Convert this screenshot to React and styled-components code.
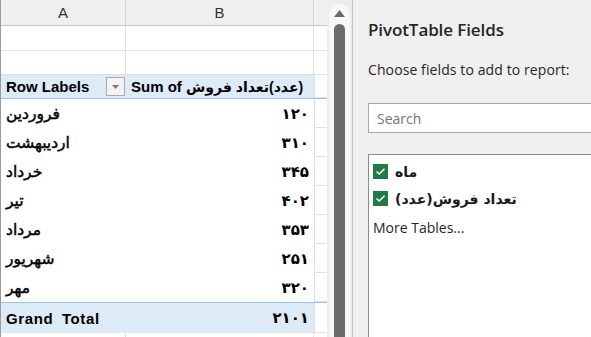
import styled, { createGlobalStyle } from "styled-components";

const GlobalStyle = createGlobalStyle`
html, body {
  margin: 0;
  padding: 0;
  width: 591px;
  height: 337px;
  overflow: hidden;
  background: #ffffff;
}
`

const rows = [
    { label: "فروردین", value: "۱۲۰" },
    { label: "اردیبهشت", value: "۳۱۰" },
    { label: "خرداد", value: "۳۴۵" },
    { label: "تیر", value: "۴۰۲" },
    { label: "مرداد", value: "۳۵۳" },
    { label: "شهریور", value: "۲۵۱" },
    { label: "مهر", value: "۳۲۰" },
]

const fields = ["ماه", "تعداد فروش(عدد)"]

const Check = () => (
    <CheckBox>
        <svg width="11" height="9" viewBox="0 0 11 9">
            <path d="M1.5 4.5 L4.2 7 L9.5 1.8" fill="none" stroke="#fff" strokeWidth="1.6" />
        </svg>
    </CheckBox>
)

const App = () => {
    return (
        <Wrap>
            <GlobalStyle />
            <Sheet>
                <HeadRow>
                    <HeadCell>A</HeadCell>
                    <HeadCell>B</HeadCell>
                    <HeadCell />
                </HeadRow>
                <GridRow $h={25}>
                    <Cell /><Cell /><Cell />
                </GridRow>
                <GridRow $h={24}>
                    <Cell /><Cell /><Cell />
                </GridRow>
                <PivotRow $head>
                    <LabelCell $bold>
                        Row Labels
                        <DropButton>
                            <svg width="7" height="4" viewBox="0 0 7 4"><path d="M0 0 H7 L3.5 4 Z" fill="#7a7a7a" /></svg>
                        </DropButton>
                    </LabelCell>
                    <LabelCell $bold>
                        Sum of&nbsp;<Farsi dir="rtl">(عدد)تعداد فروش</Farsi>
                    </LabelCell>
                    <Cell />
                </PivotRow>
                {rows.map((r) => (
                    <PivotRow key={r.label}>
                        <LabelCell $fa>{r.label}</LabelCell>
                        <ValueCell>{r.value}</ValueCell>
                        <Cell />
                    </PivotRow>
                ))}
                <PivotRow $total>
                    <LabelCell $bold $wide>Grand Total</LabelCell>
                    <ValueCell $bold>۲۱۰۱</ValueCell>
                    <Cell />
                </PivotRow>
                <GridRow $h={24}>
                    <Cell /><Cell /><Cell />
                </GridRow>
            </Sheet>
            <ScrollBar>
                <Track>
                    <svg width="11" height="7" viewBox="0 0 11 7"><path d="M0 7 L5.5 0 L11 7 Z" fill="#6b6b6b" /></svg>
                    <Thumb />
                </Track>
            </ScrollBar>
            <Panel>
                <Title>PivotTable Fields</Title>
                <Hint>Choose fields to add to report:</Hint>
                <Search>Search</Search>
                <FieldList>
                    {fields.map((f) => (
                        <FieldItem key={f}>
                            <Check />
                            <bdi dir="rtl">{f}</bdi>
                        </FieldItem>
                    ))}
                    <MoreLink>More Tables...</MoreLink>
                </FieldList>
            </Panel>
        </Wrap>
    )
}

const Wrap = styled.div`
width: 591px;
height: 337px;
display: flex;
overflow: hidden;
`
const Sheet = styled.div`
width: 327px;
flex-shrink: 0;
display: flex;
flex-direction: column;
border-left: 1px solid #9a9a9a;
box-sizing: border-box;
font-family: "Liberation Sans", "DejaVu Sans", sans-serif;
font-size: 15px;
color: #000;
& > * { flex-shrink: 0; }
`
const HeadRow = styled.div`
display: grid;
grid-template-columns: 125px 188px 1fr;
height: 26px;
background: #efefef;
border-bottom: 1px solid #c8c8c8;
box-sizing: border-box;
`
const HeadCell = styled.div`
display: flex;
align-items: center;
justify-content: center;
border-right: 1px solid #d4d4d4;
color: #333;
font-size: 15px;
&:last-child { border-right: none; }
`
const GridRow = styled.div`
display: grid;
grid-template-columns: 125px 188px 1fr;
height: ${p => p.$h}px;
border-bottom: 1px solid #e0e0e0;
box-sizing: border-box;
`
const Cell = styled.div`
border-right: 1px solid #e0e0e0;
&:last-child { border-right: none; }
`
const PivotRow = styled.div`
display: grid;
grid-template-columns: 125px 188px 1fr;
height: ${p => (p.$head ? 24 : p.$total ? 31 : 29)}px;
box-sizing: border-box;
border-top: ${p => (p.$total ? "1px solid #9dc3e6" : "none")};
border-bottom: ${p => (p.$head ? "1px solid #9dc3e6" : "none")};
background: linear-gradient(to right, ${p => (p.$head || p.$total ? "#ddebf7" : "#fff")} 313px, #fff 313px);
& > ${Cell} {
  background: #fff;
  border-bottom: 1px solid #e0e0e0;
  border-left: 1px solid #e0e0e0;
}
`
const LabelCell = styled.div`
display: flex;
align-items: center;
padding-left: 5px;
font-weight: ${p => (p.$bold ? 700 : 400)};
font-size: ${p => (p.$fa ? "15.5px" : "15px")};
-webkit-text-stroke: ${p => (p.$fa ? "0.45px #000" : "0")};
word-spacing: ${p => (p.$wide ? "4px" : "0")};
letter-spacing: ${p => (p.$wide ? "0.6px" : "0")};
white-space: nowrap;
overflow: hidden;
`
const Farsi = styled.bdi`
font-size: 14px;
`
const ValueCell = styled.div`
display: flex;
align-items: center;
justify-content: flex-end;
padding-right: 5px;
font-size: 15px;
font-weight: 700;
`
const DropButton = styled.div`
margin-left: auto;
margin-right: 1px;
width: 19px;
height: 19px;
box-sizing: border-box;
border: 1px solid #acacac;
background: #f3f3f3;
display: flex;
align-items: center;
justify-content: center;
`
const ScrollBar = styled.div`
width: 25px;
flex-shrink: 0;
background: #ececec;
border-right: 1px solid #c6c6c6;
display: flex;
justify-content: center;
padding-top: 4px;
`
const Track = styled.div`
width: 21px;
background: #f8f8f8;
border-radius: 10px 10px 0 0;
display: flex;
flex-direction: column;
align-items: center;
padding-top: 6px;
gap: 7px;
`
const Thumb = styled.div`
width: 11px;
flex: 1;
background: #6b6b6b;
border-radius: 6px 6px 0 0;
`
const Panel = styled.div`
flex: 1;
background: #f0f0f0;
padding-left: 15px;
display: flex;
flex-direction: column;
font-family: "Open Sans", "DejaVu Sans", sans-serif;
color: #262626;
& > * { flex-shrink: 0; }
`
const Title = styled.div`
margin-top: 18px;
font-size: 17px;
font-weight: 600;
color: #262626;
letter-spacing: -0.1px;
`
const Hint = styled.div`
margin-top: 19px;
font-size: 14px;
letter-spacing: 0.1px;
`
const Search = styled.div`
margin-top: 24px;
height: 30px;
box-sizing: border-box;
background: #fff;
border: 1px solid #a8a8a8;
border-right: none;
padding-left: 8px;
display: flex;
align-items: center;
color: #767676;
font-size: 14px;
`
const FieldList = styled.div`
margin-top: 21px;
flex: 1;
flex-shrink: 1;
background: #fff;
border: 1px solid #8a8a8a;
border-right: none;
border-bottom: none;
padding: 3px 0 0 4px;
display: flex;
flex-direction: column;
`
const FieldItem = styled.div`
display: flex;
align-items: center;
gap: 7px;
height: 27px;
font-family: "DejaVu Sans", sans-serif;
font-size: 14px;
font-weight: 700;
color: #1a1a1a;
`
const CheckBox = styled.div`
width: 15px;
height: 15px;
background: #1f7a45;
display: flex;
align-items: center;
justify-content: center;
`
const MoreLink = styled.div`
margin-top: 6px;
font-size: 14px;
color: #262626;
`

export default App;
